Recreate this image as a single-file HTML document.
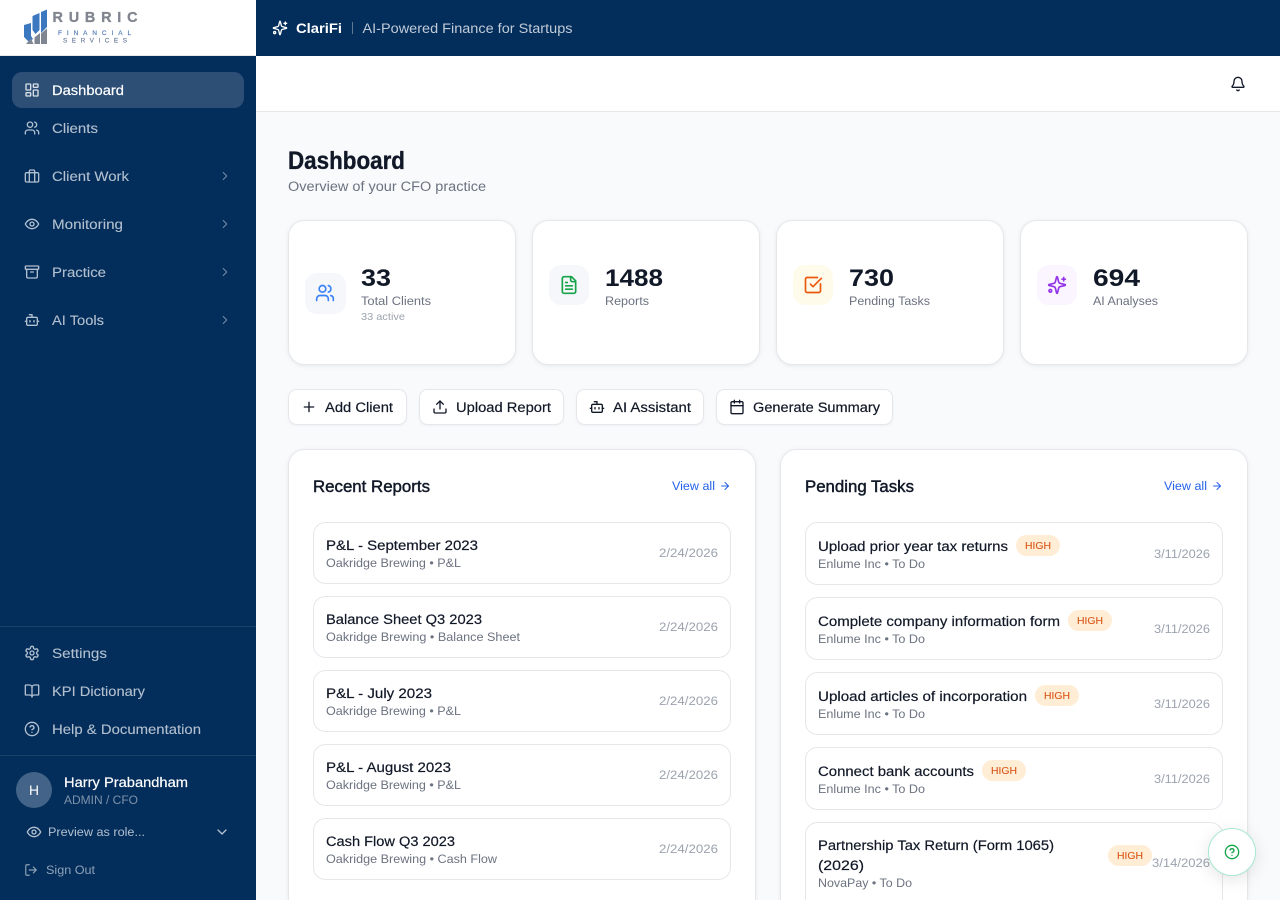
<!DOCTYPE html>
<html lang="en">
<head>
<meta charset="utf-8">
<title>ClariFi Dashboard</title>
<style>
html,body{margin:0;padding:0;width:1280px;height:900px;overflow:hidden;background:#f8fafc}
svg{display:block}
text{font-family:"Liberation Sans",Arial,sans-serif}
.i{fill:none;stroke-width:2;stroke-linecap:round;stroke-linejoin:round}
.nav{font-size:14.2px;fill:#b3c0cf;font-weight:400;stroke:#b3c0cf;stroke-width:.1px}
.t{font-size:14.2px;fill:#111827;stroke:#111827;stroke-width:.2px}
.s{font-size:12.2px;fill:#6b7280}
.d{font-size:12.2px;fill:#9ca3af}
.n{font-size:24.5px;font-weight:700;fill:#111827}
.l{font-size:12.2px;fill:#6b7280}
.b{font-size:14.2px;fill:#111827;stroke:#111827;stroke-width:.2px}
.h{font-size:16.2px;fill:#111827;font-weight:400;stroke:#111827;stroke-width:.45px}
.v{font-size:12.2px;fill:#2563eb}
.hi{font-size:10.2px;fill:#d9581a;stroke:#d9581a;stroke-width:.12px}
.card{fill:#fff;stroke:#e5e7eb;filter:drop-shadow(0 1px 2px rgba(0,0,0,.07))}
.btn{fill:#fff;stroke:#e5e7eb;filter:drop-shadow(0 1px 1px rgba(0,0,0,.04))}
.item{fill:#fff;stroke:#e5e7eb}
.bd{fill:#ffedd5}
</style>
</head>
<body>
<svg xmlns="http://www.w3.org/2000/svg" width="1280" height="900" viewBox="0 0 1280 900">
<defs>
<symbol id="dash" viewBox="0 0 24 24"><rect x="3" y="3" width="7" height="9" rx="1"/><rect x="14" y="3" width="7" height="5" rx="1"/><rect x="14" y="12" width="7" height="9" rx="1"/><rect x="3" y="16" width="7" height="5" rx="1"/></symbol>
<symbol id="users" viewBox="0 0 24 24"><path d="M16 21v-2a4 4 0 0 0-4-4H6a4 4 0 0 0-4 4v2"/><circle cx="9" cy="7" r="4"/><path d="M22 21v-2a4 4 0 0 0-3-3.87"/><path d="M16 3.13a4 4 0 0 1 0 7.75"/></symbol>
<symbol id="brief" viewBox="0 0 24 24"><rect x="2" y="7" width="20" height="14" rx="2"/><path d="M16 21V5a2 2 0 0 0-2-2h-4a2 2 0 0 0-2 2v16"/></symbol>
<symbol id="eye" viewBox="0 0 24 24"><path d="M2 12s3-7 10-7 10 7 10 7-3 7-10 7-10-7-10-7Z"/><circle cx="12" cy="12" r="3"/></symbol>
<symbol id="arch" viewBox="0 0 24 24"><rect x="2" y="3" width="20" height="5" rx="1"/><path d="M4 8v11a2 2 0 0 0 2 2h12a2 2 0 0 0 2-2V8"/><path d="M10 12h4"/></symbol>
<symbol id="bot" viewBox="0 0 24 24"><path d="M12 8V4H8"/><rect x="4" y="8" width="16" height="12" rx="2"/><path d="M2 14h2"/><path d="M20 14h2"/><path d="M15 13v2"/><path d="M9 13v2"/></symbol>
<symbol id="cr" viewBox="0 0 24 24"><path d="m9 18 6-6-6-6"/></symbol>
<symbol id="cd" viewBox="0 0 24 24"><path d="m6 9 6 6 6-6"/></symbol>
<symbol id="gear" viewBox="0 0 24 24"><path d="M12.22 2h-.44a2 2 0 0 0-2 2v.18a2 2 0 0 1-1 1.73l-.43.25a2 2 0 0 1-2 0l-.15-.08a2 2 0 0 0-2.73.73l-.22.38a2 2 0 0 0 .73 2.73l.15.1a2 2 0 0 1 1 1.72v.51a2 2 0 0 1-1 1.74l-.15.09a2 2 0 0 0-.73 2.73l.22.38a2 2 0 0 0 2.73.73l.15-.08a2 2 0 0 1 2 0l.43.25a2 2 0 0 1 1 1.73V20a2 2 0 0 0 2 2h.44a2 2 0 0 0 2-2v-.18a2 2 0 0 1 1-1.73l.43-.25a2 2 0 0 1 2 0l.15.08a2 2 0 0 0 2.73-.73l.22-.39a2 2 0 0 0-.73-2.73l-.15-.08a2 2 0 0 1-1-1.74v-.5a2 2 0 0 1 1-1.74l.15-.09a2 2 0 0 0 .73-2.73l-.22-.38a2 2 0 0 0-2.73-.73l-.15.08a2 2 0 0 1-2 0l-.43-.25a2 2 0 0 1-1-1.73V4a2 2 0 0 0-2-2z"/><circle cx="12" cy="12" r="3"/></symbol>
<symbol id="book" viewBox="0 0 24 24"><path d="M12 7v14"/><path d="M3 18a1 1 0 0 1-1-1V4a1 1 0 0 1 1-1h5a4 4 0 0 1 4 4 4 4 0 0 1 4-4h5a1 1 0 0 1 1 1v13a1 1 0 0 1-1 1h-6a3 3 0 0 0-3 3 3 3 0 0 0-3-3z"/></symbol>
<symbol id="help" viewBox="0 0 24 24"><circle cx="12" cy="12" r="10"/><path d="M9.09 9a3 3 0 0 1 5.83 1c0 2-3 3-3 3"/><path d="M12 17h.01"/></symbol>
<symbol id="out" viewBox="0 0 24 24"><path d="M9 21H5a2 2 0 0 1-2-2V5a2 2 0 0 1 2-2h4"/><path d="m16 17 5-5-5-5"/><path d="M21 12H9"/></symbol>
<symbol id="spark" viewBox="0 0 24 24"><path d="M9.937 15.5A2 2 0 0 0 8.5 14.063l-6.135-1.582a.5.5 0 0 1 0-.962L8.5 9.936A2 2 0 0 0 9.937 8.5l1.582-6.135a.5.5 0 0 1 .963 0L14.063 8.5A2 2 0 0 0 15.5 9.937l6.135 1.581a.5.5 0 0 1 0 .964L15.5 14.063a2 2 0 0 0-1.437 1.437l-1.582 6.135a.5.5 0 0 1-.963 0z"/><path d="M20 3v4"/><path d="M22 5h-4"/><circle cx="4" cy="19" r="1.6"/></symbol>
<symbol id="file" viewBox="0 0 24 24"><path d="M15 2H6a2 2 0 0 0-2 2v16a2 2 0 0 0 2 2h12a2 2 0 0 0 2-2V7Z"/><path d="M14 2v4a2 2 0 0 0 2 2h4"/><path d="M10 9H8"/><path d="M16 13H8"/><path d="M16 17H8"/></symbol>
<symbol id="check" viewBox="0 0 24 24"><path d="M21 10.656V19a2 2 0 0 1-2 2H5a2 2 0 0 1-2-2V5a2 2 0 0 1 2-2h12.344"/><path d="m9 11 3 3L22 4"/></symbol>
<symbol id="plus" viewBox="0 0 24 24"><path d="M5 12h14"/><path d="M12 5v14"/></symbol>
<symbol id="up" viewBox="0 0 24 24"><path d="M21 15v4a2 2 0 0 1-2 2H5a2 2 0 0 1-2-2v-4"/><path d="m17 8-5-5-5 5"/><path d="M12 3v12"/></symbol>
<symbol id="cal" viewBox="0 0 24 24"><path d="M8 2v4"/><path d="M16 2v4"/><rect x="3" y="4" width="18" height="18" rx="2"/><path d="M3 10h18"/></symbol>
<symbol id="bell" viewBox="0 0 24 24"><path d="M10.268 21a2 2 0 0 0 3.464 0"/><path d="M3.262 15.326A1 1 0 0 0 4 17h16a1 1 0 0 0 .74-1.673C19.41 13.956 18 12.499 18 8A6 6 0 0 0 6 8c0 4.499-1.411 5.956-2.738 7.326"/></symbol>
<symbol id="arr" viewBox="0 0 24 24"><path d="M5 12h14"/><path d="m12 5 7 7-7 7"/></symbol>
</defs>

<rect width="1280" height="900" fill="#f8fafc"/>

<!-- top bar -->
<rect x="256" y="0" width="1024" height="56" fill="#032d5b"/>
<use href="#spark" x="272" y="20" width="16" height="16" class="i" stroke="#fff"/>
<text x="296" y="33" font-size="14.2" font-weight="700" fill="#fff" textLength="46" lengthAdjust="spacingAndGlyphs">ClariFi</text>
<rect x="352" y="22" width="1" height="12" fill="#5f7894"/>
<text x="362.5" y="33" font-size="14.2" fill="#c0cbd8" textLength="210" lengthAdjust="spacingAndGlyphs">AI-Powered Finance for Startups</text>

<!-- header -->
<rect x="256" y="56" width="1024" height="55" fill="#fff"/>
<rect x="256" y="111" width="1024" height="1" fill="#e5e7eb"/>
<use href="#bell" x="1230" y="76" width="16" height="16" class="i" stroke="#111827"/>

<!-- logo area -->
<rect x="0" y="0" width="256" height="55" fill="#fff"/>
<rect x="0" y="55" width="256" height="1" fill="#e5e7eb"/>
<g fill="#3b78c0">
<polygon points="24,25 31,23 31,36 33,39 29,42 24,37"/>
<polygon points="32.5,16 39.5,13 39.5,30 35.5,34 32.5,30"/>
<polygon points="41,12 47,9.5 47,27 41,33"/>
</g>
<g fill="#7f8692">
<polygon points="26,44 31,38.5 33.5,44"/>
<polygon points="34.5,44 34.5,37.5 40,33 40,44"/>
<polygon points="41,44 41,33.5 47,28.5 47,44"/>
</g>
<text x="52.5" y="22" font-size="14.4" font-weight="700" fill="#80858f" stroke="#80858f" stroke-width=".3" textLength="85" lengthAdjust="spacing">RUBRIC</text>
<text x="58" y="35" font-size="6.4" fill="#4f78b5" stroke="#4f78b5" stroke-width=".15" textLength="73" lengthAdjust="spacing">FINANCIAL</text>
<text x="63" y="42.6" font-size="6.4" fill="#6d7f9c" stroke="#6d7f9c" stroke-width=".15" textLength="64" lengthAdjust="spacing">SERVICES</text>

<!-- sidebar -->
<rect x="0" y="56" width="256" height="844" fill="#032d5b"/>
<rect x="12" y="72" width="232" height="36" rx="10" fill="#2d4f76"/>
<use href="#dash" x="24" y="82" width="16" height="16" class="i" stroke="#d9e0e8"/>
<text x="52" y="95" font-size="14.2" fill="#fff" stroke="#fff" stroke-width=".2" textLength="72" lengthAdjust="spacingAndGlyphs">Dashboard</text>

<use href="#users" x="24" y="120" width="16" height="16" class="i" stroke="#b3c0cf"/>
<text x="52" y="133" class="nav" textLength="46" lengthAdjust="spacingAndGlyphs">Clients</text>
<use href="#brief" x="24" y="168" width="16" height="16" class="i" stroke="#b3c0cf"/>
<text x="52" y="181" class="nav" textLength="77" lengthAdjust="spacingAndGlyphs">Client Work</text>
<use href="#cr" x="218" y="169" width="14" height="14" class="i" stroke="#7088a3"/>
<use href="#eye" x="24" y="216" width="16" height="16" class="i" stroke="#b3c0cf"/>
<text x="52" y="229" class="nav" textLength="71" lengthAdjust="spacingAndGlyphs">Monitoring</text>
<use href="#cr" x="218" y="217" width="14" height="14" class="i" stroke="#7088a3"/>
<use href="#arch" x="24" y="264" width="16" height="16" class="i" stroke="#b3c0cf"/>
<text x="52" y="277" class="nav" textLength="54" lengthAdjust="spacingAndGlyphs">Practice</text>
<use href="#cr" x="218" y="265" width="14" height="14" class="i" stroke="#7088a3"/>
<use href="#bot" x="24" y="312" width="16" height="16" class="i" stroke="#b3c0cf"/>
<text x="52" y="325" class="nav" textLength="52" lengthAdjust="spacingAndGlyphs">AI Tools</text>
<use href="#cr" x="218" y="313" width="14" height="14" class="i" stroke="#7088a3"/>

<rect x="0" y="626" width="256" height="1" fill="#1c4269"/>
<use href="#gear" x="24" y="645" width="16" height="16" class="i" stroke="#b3c0cf"/>
<text x="52" y="658" class="nav" textLength="55" lengthAdjust="spacingAndGlyphs">Settings</text>
<use href="#book" x="24" y="683" width="16" height="16" class="i" stroke="#b3c0cf"/>
<text x="52" y="696" class="nav" textLength="93" lengthAdjust="spacingAndGlyphs">KPI Dictionary</text>
<use href="#help" x="24" y="721" width="16" height="16" class="i" stroke="#b3c0cf"/>
<text x="52" y="734" class="nav" textLength="149" lengthAdjust="spacingAndGlyphs">Help &amp; Documentation</text>

<rect x="0" y="755" width="256" height="1" fill="#1c4269"/>
<circle cx="34" cy="790" r="18" fill="#436488"/>
<text x="29" y="795" font-size="14.2" fill="#fff" textLength="10" lengthAdjust="spacingAndGlyphs">H</text>
<text x="64" y="787" font-size="14.2" fill="#fff" stroke="#fff" stroke-width=".2" textLength="124" lengthAdjust="spacingAndGlyphs">Harry Prabandham</text>
<text x="64" y="804" font-size="12.2" fill="#7f93aa" textLength="74" lengthAdjust="spacingAndGlyphs">ADMIN / CFO</text>
<use href="#eye" x="26" y="824" width="16" height="16" class="i" stroke="#b3c0cf"/>
<text x="48" y="836" font-size="12.2" fill="#b3c0cf" textLength="97" lengthAdjust="spacingAndGlyphs">Preview as role...</text>
<use href="#cd" x="214" y="824" width="16" height="16" class="i" stroke="#b3c0cf"/>
<use href="#out" x="24" y="863" width="14" height="14" class="i" stroke="#8fa2b6"/>
<text x="46" y="874" font-size="12.2" fill="#8fa2b6" textLength="49" lengthAdjust="spacingAndGlyphs">Sign Out</text>

<!-- page title -->
<text x="288" y="169" font-size="24.6" font-weight="700" fill="#111827" stroke="#111827" stroke-width=".35" textLength="117" lengthAdjust="spacingAndGlyphs">Dashboard</text>
<text x="288" y="191" font-size="14.2" fill="#6b7280" textLength="198" lengthAdjust="spacingAndGlyphs">Overview of your CFO practice</text>

<!-- stat cards -->
<rect class="card" x="288.5" y="220.5" width="227" height="144" rx="16"/>
<rect x="305" y="273" width="41" height="41" rx="12" fill="#f5f7fa"/>
<use href="#users" x="315" y="283" width="20" height="20" class="i" stroke="#3b82f6"/>
<text x="361" y="286" class="n" textLength="30" lengthAdjust="spacingAndGlyphs">33</text>
<text x="361" y="305" class="l" textLength="70" lengthAdjust="spacingAndGlyphs">Total Clients</text>
<text x="361" y="320" font-size="10.2" fill="#9ca3af" textLength="44" lengthAdjust="spacingAndGlyphs">33 active</text>

<rect class="card" x="532.5" y="220.5" width="227" height="144" rx="16"/>
<rect x="549" y="265" width="40" height="40" rx="12" fill="#f5f7fa"/>
<use href="#file" x="559" y="275" width="20" height="20" class="i" stroke="#16a34a"/>
<text x="605" y="286" class="n" textLength="58" lengthAdjust="spacingAndGlyphs">1488</text>
<text x="605" y="305" class="l" textLength="44" lengthAdjust="spacingAndGlyphs">Reports</text>

<rect class="card" x="776.5" y="220.5" width="227" height="144" rx="16"/>
<rect x="793" y="265" width="40" height="40" rx="12" fill="#fffbeb"/>
<use href="#check" x="803" y="275" width="20" height="20" class="i" stroke="#ea580c"/>
<text x="849" y="286" class="n" textLength="45" lengthAdjust="spacingAndGlyphs">730</text>
<text x="849" y="305" class="l" textLength="81" lengthAdjust="spacingAndGlyphs">Pending Tasks</text>

<rect class="card" x="1020.5" y="220.5" width="227" height="144" rx="16"/>
<rect x="1037" y="265" width="40" height="40" rx="12" fill="#faf5ff"/>
<use href="#spark" x="1047" y="275" width="20" height="20" class="i" stroke="#9333ea"/>
<text x="1093" y="286" class="n" textLength="47" lengthAdjust="spacingAndGlyphs">694</text>
<text x="1093" y="305" class="l" textLength="65" lengthAdjust="spacingAndGlyphs">AI Analyses</text>

<!-- buttons -->
<rect class="btn" x="288.5" y="389.5" width="118" height="35" rx="8"/>
<use href="#plus" x="301" y="399" width="16" height="16" class="i" stroke="#111827"/>
<text x="325" y="412" class="b" textLength="68" lengthAdjust="spacingAndGlyphs">Add Client</text>
<rect class="btn" x="419.5" y="389.5" width="144" height="35" rx="8"/>
<use href="#up" x="432" y="399" width="16" height="16" class="i" stroke="#111827"/>
<text x="456" y="412" class="b" textLength="95" lengthAdjust="spacingAndGlyphs">Upload Report</text>
<rect class="btn" x="576.5" y="389.5" width="127" height="35" rx="8"/>
<use href="#bot" x="589" y="399" width="16" height="16" class="i" stroke="#111827"/>
<text x="613" y="412" class="b" textLength="78" lengthAdjust="spacingAndGlyphs">AI Assistant</text>
<rect class="btn" x="716.5" y="389.5" width="176" height="35" rx="8"/>
<use href="#cal" x="729" y="399" width="16" height="16" class="i" stroke="#111827"/>
<text x="753" y="412" class="b" textLength="127" lengthAdjust="spacingAndGlyphs">Generate Summary</text>

<!-- Recent Reports -->
<path class="card" d="M288.5 900V465.5a16 16 0 0 1 16-16h435a16 16 0 0 1 16 16V900"/>
<text x="313" y="492" class="h" textLength="117" lengthAdjust="spacingAndGlyphs">Recent Reports</text>
<text x="672" y="490" class="v" textLength="43" lengthAdjust="spacingAndGlyphs">View all</text>
<use href="#arr" x="719" y="480" width="12" height="12" class="i" stroke="#2563eb"/>

<rect class="item" x="313.5" y="522.5" width="417" height="61" rx="12"/>
<text x="326" y="550" class="t" textLength="152" lengthAdjust="spacingAndGlyphs">P&amp;L - September 2023</text>
<text x="326" y="567" class="s" textLength="135" lengthAdjust="spacingAndGlyphs">Oakridge Brewing • P&amp;L</text>
<text x="659" y="557" class="d" textLength="59" lengthAdjust="spacingAndGlyphs">2/24/2026</text>

<rect class="item" x="313.5" y="596.5" width="417" height="61" rx="12"/>
<text x="326" y="624" class="t" textLength="156" lengthAdjust="spacingAndGlyphs">Balance Sheet Q3 2023</text>
<text x="326" y="641" class="s" textLength="194" lengthAdjust="spacingAndGlyphs">Oakridge Brewing • Balance Sheet</text>
<text x="659" y="631" class="d" textLength="59" lengthAdjust="spacingAndGlyphs">2/24/2026</text>

<rect class="item" x="313.5" y="670.5" width="417" height="61" rx="12"/>
<text x="326" y="698" class="t" textLength="106" lengthAdjust="spacingAndGlyphs">P&amp;L - July 2023</text>
<text x="326" y="715" class="s" textLength="135" lengthAdjust="spacingAndGlyphs">Oakridge Brewing • P&amp;L</text>
<text x="659" y="705" class="d" textLength="59" lengthAdjust="spacingAndGlyphs">2/24/2026</text>

<rect class="item" x="313.5" y="744.5" width="417" height="61" rx="12"/>
<text x="326" y="772" class="t" textLength="125" lengthAdjust="spacingAndGlyphs">P&amp;L - August 2023</text>
<text x="326" y="789" class="s" textLength="135" lengthAdjust="spacingAndGlyphs">Oakridge Brewing • P&amp;L</text>
<text x="659" y="779" class="d" textLength="59" lengthAdjust="spacingAndGlyphs">2/24/2026</text>

<rect class="item" x="313.5" y="818.5" width="417" height="61" rx="12"/>
<text x="326" y="846" class="t" textLength="129" lengthAdjust="spacingAndGlyphs">Cash Flow Q3 2023</text>
<text x="326" y="863" class="s" textLength="171" lengthAdjust="spacingAndGlyphs">Oakridge Brewing • Cash Flow</text>
<text x="659" y="853" class="d" textLength="59" lengthAdjust="spacingAndGlyphs">2/24/2026</text>

<!-- Pending Tasks -->
<path class="card" d="M780.5 900V465.5a16 16 0 0 1 16-16h435a16 16 0 0 1 16 16V900"/>
<text x="805" y="492" class="h" textLength="109" lengthAdjust="spacingAndGlyphs">Pending Tasks</text>
<text x="1164" y="490" class="v" textLength="43" lengthAdjust="spacingAndGlyphs">View all</text>
<use href="#arr" x="1211" y="480" width="12" height="12" class="i" stroke="#2563eb"/>

<rect class="item" x="805.5" y="522.5" width="417" height="62" rx="12"/>
<text x="818" y="551" class="t" textLength="190" lengthAdjust="spacingAndGlyphs">Upload prior year tax returns</text>
<rect class="bd" x="1016" y="535" width="44" height="21" rx="10.5"/>
<text x="1025" y="549" class="hi" textLength="26" lengthAdjust="spacingAndGlyphs">HIGH</text>
<text x="818" y="568" class="s" textLength="107" lengthAdjust="spacingAndGlyphs">Enlume Inc • To Do</text>
<text x="1154" y="558" class="d" textLength="56" lengthAdjust="spacingAndGlyphs">3/11/2026</text>

<rect class="item" x="805.5" y="597.5" width="417" height="62" rx="12"/>
<text x="818" y="626" class="t" textLength="242" lengthAdjust="spacingAndGlyphs">Complete company information form</text>
<rect class="bd" x="1068" y="610" width="44" height="21" rx="10.5"/>
<text x="1077" y="624" class="hi" textLength="26" lengthAdjust="spacingAndGlyphs">HIGH</text>
<text x="818" y="643" class="s" textLength="107" lengthAdjust="spacingAndGlyphs">Enlume Inc • To Do</text>
<text x="1154" y="633" class="d" textLength="56" lengthAdjust="spacingAndGlyphs">3/11/2026</text>

<rect class="item" x="805.5" y="672.5" width="417" height="62" rx="12"/>
<text x="818" y="701" class="t" textLength="209" lengthAdjust="spacingAndGlyphs">Upload articles of incorporation</text>
<rect class="bd" x="1035" y="685" width="44" height="21" rx="10.5"/>
<text x="1044" y="699" class="hi" textLength="26" lengthAdjust="spacingAndGlyphs">HIGH</text>
<text x="818" y="718" class="s" textLength="107" lengthAdjust="spacingAndGlyphs">Enlume Inc • To Do</text>
<text x="1154" y="708" class="d" textLength="56" lengthAdjust="spacingAndGlyphs">3/11/2026</text>

<rect class="item" x="805.5" y="747.5" width="417" height="62" rx="12"/>
<text x="818" y="776" class="t" textLength="156" lengthAdjust="spacingAndGlyphs">Connect bank accounts</text>
<rect class="bd" x="982" y="760" width="44" height="21" rx="10.5"/>
<text x="991" y="774" class="hi" textLength="26" lengthAdjust="spacingAndGlyphs">HIGH</text>
<text x="818" y="793" class="s" textLength="107" lengthAdjust="spacingAndGlyphs">Enlume Inc • To Do</text>
<text x="1154" y="783" class="d" textLength="56" lengthAdjust="spacingAndGlyphs">3/11/2026</text>

<path class="item" d="M805.5 900V834.5a12 12 0 0 1 12-12h393a12 12 0 0 1 12 12V900"/>
<text x="818" y="850" class="t" textLength="236" lengthAdjust="spacingAndGlyphs">Partnership Tax Return (Form 1065)</text>
<text x="818" y="870" class="t" textLength="46" lengthAdjust="spacingAndGlyphs">(2026)</text>
<rect class="bd" x="1108" y="845" width="44" height="21" rx="10.5"/>
<text x="1117" y="859" class="hi" textLength="26" lengthAdjust="spacingAndGlyphs">HIGH</text>
<text x="818" y="887" class="s" textLength="94" lengthAdjust="spacingAndGlyphs">NovaPay • To Do</text>
<text x="1152" y="867" class="d" textLength="58" lengthAdjust="spacingAndGlyphs">3/14/2026</text>

<!-- floating help -->
<circle cx="1232" cy="852" r="23.5" fill="#fff" stroke="#a7e8d0" style="filter:drop-shadow(0 4px 8px rgba(0,0,0,.1))"/>
<use href="#help" x="1224" y="844" width="16" height="16" class="i" stroke="#16a34a"/>
</svg>
</body>
</html>
